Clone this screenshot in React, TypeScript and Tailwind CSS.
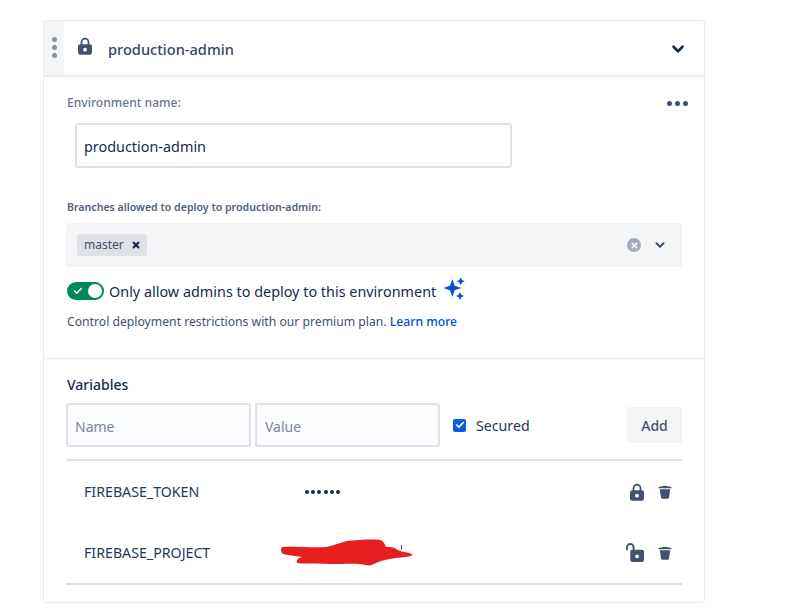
import { Check, ChevronDown, X } from "lucide-react";

function LockIcon({ className }: { className?: string }) {
  return (
    <svg viewBox="0 0 16 20" className={className} fill="currentColor">
      <path
        fillRule="evenodd"
        d="M3 8V5.500a5 5 0 0 1 10 0V8h.5A2.500 2.500 0 0 1 16 10.500v7a2.500 2.500 0 0 1-2.500 2.500h-11A2.500 2.500 0 0 1 0 17.500v-7A2.500 2.500 0 0 1 2.500 8H3Zm2 0h6V5.500a3 3 0 0 0-6 0V8Zm3 4a2.200 2.200 0 1 0 0 4.400 2.200 2.200 0 0 0 0-4.400Z"
      />
    </svg>
  );
}

function UnlockIcon({ className }: { className?: string }) {
  return (
    <svg viewBox="0 0 19 20" className={className} fill="currentColor">
      <path
        fillRule="evenodd"
        d="M4.500 9A2 2 0 0 1 6.500 7H17a2 2 0 0 1 2 2v9a2 2 0 0 1-2 2H6.500a2 2 0 0 1-2-2V9Zm7.200 3a2 2 0 1 0 0 4 2 2 0 0 0 0-4Z"
      />
      <path d="M8 7V4.500a3.500 3.500 0 0 0-7 0V6.500" fill="none" stroke="currentColor" strokeWidth="2" strokeLinecap="round" />
    </svg>
  );
}

function TrashIcon({ className }: { className?: string }) {
  return (
    <svg viewBox="0 0 14 14" className={className} fill="currentColor">
      <path d="M0.500 2.300C2 1.600 4 1.400 5 1.300 5.300 0.600 8.700 0.600 9 1.300 10 1.400 12 1.600 13.500 2.300V3.200H0.500Z" />
      <path d="M1.800 4.200H12.200L11 12.500C10.900 13.400 10.200 13.800 9.500 13.800H4.500C3.800 13.800 3.100 13.400 3 12.500Z" />
    </svg>
  );
}

function Sparkle({ className }: { className?: string }) {
  return (
    <svg viewBox="0 0 24 24" className={className} fill="currentColor">
      <path d="M10.300 2 12.600 8.700 19.300 11 12.600 13.300 10.300 20 8 13.300 1.300 11 8 8.700Z" />
      <path d="M18.700 0.300 20 3 22.700 4.300 20 5.600 18.700 8.300 17.400 5.600 14.700 4.300 17.400 3Z" />
      <path d="M18 15 19.300 17.700 22 19 19.300 20.300 18 23 16.700 20.300 14 19 16.700 17.700Z" />
    </svg>
  );
}

function Scribble({ className }: { className?: string }) {
  return (
    <svg viewBox="0 0 132 28" className={className}>
      <rect x="121" y="6" width="1" height="5" fill="#42526e" />
      <path
        fill="#e71e1e"
        d="M2 8C12 7 34 9 47 8 54 6 60 4 67 2 76 1 94 0 100 1 104 2 105 6 106 8 110 8 114 8 116 10 119 12 122 12 124 13 128 14 132 14 132 16 131 18 122 18 116 19 108 20 100 22 96 24 92 26 90 27 86 26 78 24 66 25 50 25 30 24 20 25 17 24 16 21 18 19 22 18 14 17 7 16 3 15 0 12 1 9 2 8Z"
      />
    </svg>
  );
}

function VariableRow({ name, children, locked }: { name: string; children: React.ReactNode; locked: boolean }) {
  return (
    <div className="flex h-[61px] items-center text-[14.2px] text-[#253858]">
      <div className="w-[214px] pl-[18px]">{name}</div>
      <div className="relative flex-1">{children}</div>
      <div className="flex items-center text-[#42526e]">
        <div className="flex w-[21px] justify-end">
          {locked ? <LockIcon className="h-[18px] w-[14px]" /> : <UnlockIcon className="h-[19px] w-[18px]" />}
        </div>
        <TrashIcon className="ml-[14px] mr-[10px] h-[14px] w-[14px]" />
      </div>
    </div>
  );
}

export default function App() {
  return (
    <div className="min-h-[615px] bg-white pt-[20px] pl-[43px] font-['Noto_Sans',sans-serif] text-[#172b4d]">
      <div className="h-[583px] w-[662px] rounded-[3px] border border-[#ebecf0]">
        <header className="flex h-[56px] items-stretch border-b-2 border-[#ebecf0]">
          <div className="flex w-[20px] flex-col items-center justify-center gap-[3px] bg-[#f4f5f7] pb-[2px]">
            <span className="h-[5px] w-[5px] rounded-full bg-[#8993a4]" />
            <span className="h-[5px] w-[5px] rounded-full bg-[#8993a4]" />
            <span className="h-[5px] w-[5px] rounded-full bg-[#8993a4]" />
          </div>
          <div className="flex flex-1 items-center pl-[14px] pr-[17px]">
            <LockIcon className="mb-[4px] h-[18px] w-[14px] text-[#42526e]" />
            <span className="ml-[16px] pt-[3px] text-[14.6px] font-medium text-[#344563]">production-admin</span>
            <ChevronDown className="ml-auto mt-[2px] h-[18px] w-[18px] text-[#172b4d]" strokeWidth={3.5} />
          </div>
        </header>

        <section className="border-b border-[#ebecf0] px-[22px] pt-[17px]">
          <div className="flex items-center justify-between">
            <label className="pl-[1px] text-[12.1px] font-medium leading-[18px] text-[#6b778c]">Environment name:</label>
            <div className="-mr-[6px] flex gap-[3px]">
              <span className="h-[5px] w-[5px] rounded-full bg-[#42526e]" />
              <span className="h-[5px] w-[5px] rounded-full bg-[#42526e]" />
              <span className="h-[5px] w-[5px] rounded-full bg-[#42526e]" />
            </div>
          </div>
          <div className="mt-[11px] ml-[9px] flex h-[45px] w-[437px] items-center rounded-[3px] border-2 border-[#dfe1e6] px-[7px] pt-[2px] text-[14.4px] text-[#172b4d]">
            production-admin
          </div>
          <label className="mt-[30px] block pl-[1px] text-[10.6px] font-semibold leading-[18px] text-[#505f79]">
            Branches allowed to deploy to production-admin:
          </label>
          <div className="mt-[7px] flex h-[44px] items-center rounded-[3px] bg-[#f4f5f7] pl-[11px] pr-[15px]">
            <span className="flex h-[22px] w-[70px] items-center rounded-[3px] bg-[#dfe1e6] pl-[7px] text-[12px] text-[#42526e]">
              master
              <X className="ml-[7px] h-[10px] w-[10px] text-[#172b4d]" strokeWidth={5} />
            </span>
            <span className="ml-auto flex h-[14px] w-[14px] items-center justify-center rounded-full bg-[#a5adba]">
              <X className="h-[9px] w-[9px] text-white" strokeWidth={4} />
            </span>
            <ChevronDown className="ml-[12px] h-[14px] w-[14px] text-[#42526e]" strokeWidth={3.5} />
          </div>
          <div className="mt-[10px] flex items-center">
            <span className="ml-[1px] flex h-[18px] w-[37px] items-center justify-between rounded-full bg-[#00875a] pl-[6px] pr-[2px]">
              <Check className="h-[10px] w-[10px] text-white" strokeWidth={4} />
              <span className="h-[14px] w-[14px] rounded-full bg-white" />
            </span>
            <span className="ml-[5px] pt-[2px] text-[14.4px] text-[#172b4d]">Only allow admins to deploy to this environment</span>
            <Sparkle className="mb-[3px] ml-[6px] h-[24px] w-[24px] text-[#0052cc]" />
          </div>
          <p className="mt-[9px] mb-[27px] pl-[1px] text-[12.2px] leading-[18px] text-[#42526e]">
            Control deployment restrictions with our premium plan.{" "}
            <a className="font-medium text-[#0052cc]">Learn more</a>
          </p>
        </section>

        <section className="px-[22px] pt-[16px]">
          <h3 className="pl-[1px] text-[14px] font-medium leading-[20px] text-[#172b4d]">Variables</h3>
          <div className="mt-[8px] flex items-center">
            <div className="flex h-[44px] w-[185px] items-center rounded-[3px] border-2 border-[#dfe1e6] bg-[#fafbfc] px-[7px] pt-[2px] text-[14px] text-[#7a869a]">
              Name
            </div>
            <div className="ml-[4px] flex h-[44px] w-[185px] items-center rounded-[3px] border-2 border-[#dfe1e6] bg-[#fafbfc] px-[8px] pt-[2px] text-[14px] text-[#7a869a]">
              Value
            </div>
            <span className="ml-[13px] flex h-[13px] w-[13px] items-center justify-center rounded-[2px] bg-[#0a5fe0]">
              <Check className="h-[10px] w-[10px] text-white" strokeWidth={4} />
            </span>
            <span className="ml-[10px] pt-[1px] text-[14.2px] text-[#253858]">Secured</span>
            <button
              type="button"
              className="ml-auto flex h-[36px] w-[55px] items-center justify-center rounded-[3px] bg-[#f4f5f7] text-[14px] font-medium text-[#42526e]"
            >
              Add
            </button>
          </div>
          <div className="mt-[12px] border-y-2 border-[#dfe1e6]">
            <VariableRow name="FIREBASE_TOKEN" locked>
              <span className="flex gap-[2.200px] pl-[25px]">
                {[0, 1, 2, 3, 4, 5].map((i) => (
                  <span key={i} className="h-[4px] w-[4px] rounded-full bg-[#172b4d]" />
                ))}
              </span>
            </VariableRow>
            <VariableRow name="FIREBASE_PROJECT" locked={false}>
              <Scribble className="h-[28px] w-[132px]" />
            </VariableRow>
          </div>
        </section>
      </div>
    </div>
  );
}
